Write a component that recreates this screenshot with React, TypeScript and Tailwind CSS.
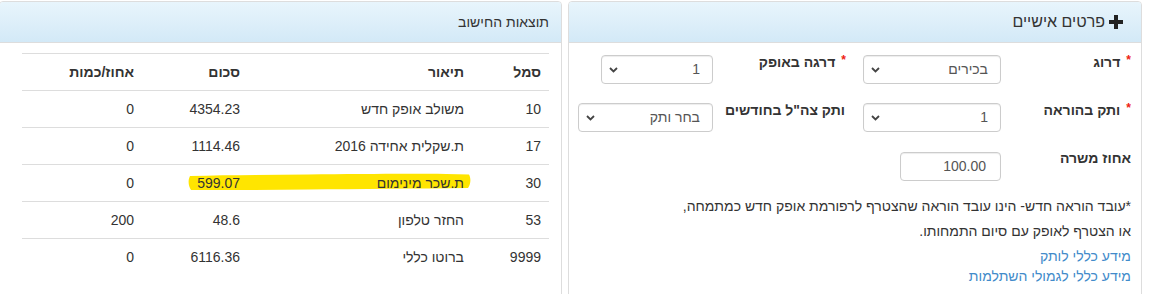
import React from "react";

const rows = [
  { code: "10", desc: "משולב אופק חדש", sum: "4354.23", pct: "0" },
  { code: "17", desc: "ת.שקלית אחידה 2016", sum: "1114.46", pct: "0" },
  { code: "30", desc: "ת.שכר מינימום", sum: "599.07", pct: "0" },
  { code: "53", desc: "החזר טלפון", sum: "48.6", pct: "200" },
  { code: "9999", desc: "ברוטו כללי", sum: "6116.36", pct: "0" },
];

function Chevron() {
  return (
    <svg width="9" height="6" viewBox="0 0 9 6" className="shrink-0">
      <path d="M1 1 L4.5 4.5 L8 1" fill="none" stroke="#444" strokeWidth="1.8" />
    </svg>
  );
}

function Select({ value, w }: { value: string; w: string }) {
  return (
    <div
      className={`${w} h-[29px] mt-[3px] border border-[#ccc] rounded-[4px] bg-white flex items-center justify-between pr-[12px] pl-[7px] text-[14px] text-[#555] shadow-[inset_0_1px_1px_rgba(0,0,0,0.075)]`}
    >
      <span>{value}</span>
      <Chevron />
    </div>
  );
}

function Star() {
  return <span className="text-[#e21] text-[12px] leading-none relative top-[2px] ml-[6px]">*</span>;
}

export default function App() {
  return (
    <div
      dir="rtl"
      className="w-[1160px] h-[294px] overflow-hidden bg-white flex items-start gap-[6px] pr-[18px] pt-[1px] font-['Liberation_Sans',Arial,sans-serif] text-[14px] text-[#333]"
    >
      {/* Right panel: personal details */}
      <div className="shrink-0 w-[574px] h-[320px] border border-[#ddd] rounded-[4px]">
        <div className="h-[41px] border-b border-[#ddd] rounded-t-[3px] bg-linear-to-b from-[#e8f5fc] to-[#d3e9f7] flex items-center gap-[4px] pr-[4px]">
          <svg width="14" height="14" viewBox="0 0 14 14" className="mr-[14px]">
            <rect x="0" y="5" width="14" height="4" fill="#222" />
            <rect x="5" y="0" width="4" height="14" fill="#222" />
          </svg>
          <span className="text-[16px] text-[#333]">פרטים אישיים</span>
        </div>
        <div className="pt-[9px] pr-[10px]">
          <div className="h-[48px] flex items-start">
            <div className="w-[130px] leading-[20px] font-bold flex items-start">
              <Star />
              <span>דרוג</span>
            </div>
            <Select value="בכירים" w="w-[138px]" />
            <div className="w-[150px] pr-[17px] leading-[20px] font-bold flex items-start">
              <Star />
              <span>דרגה באופק</span>
            </div>
            <Select value="1" w="w-[112px]" />
          </div>
          <div className="h-[48px] flex items-start">
            <div className="w-[130px] leading-[20px] font-bold flex items-start">
              <Star />
              <span>ותק בהוראה</span>
            </div>
            <Select value="1" w="w-[138px]" />
            <div className="w-[150px] pr-[18px] leading-[20px] font-bold">ותק צה"ל בחודשים</div>
            <Select value="בחר ותק" w="w-[135px]" />
          </div>
          <div className="h-[48px] flex items-start">
            <div className="w-[130px] leading-[20px] font-bold">אחוז משרה</div>
            <div className="w-[101px] h-[29px] mt-[4px] border border-[#ccc] rounded-[4px] flex items-center pr-[14px] text-[#555] shadow-[inset_0_1px_1px_rgba(0,0,0,0.075)]">
              100.00
            </div>
          </div>
          <p className="leading-[20px] mb-[5px]">
            *עובד הוראה חדש- הינו עובד הוראה שהצטרף לרפורמת אופק חדש כמתמחה,
          </p>
          <p className="leading-[20px] mb-[5px]">או הצטרף לאופק עם סיום התמחותו.</p>
          <div className="leading-[20px] text-[#428bca]">
            <div>מידע כללי לותק</div>
            <div>מידע כללי לגמולי השתלמות</div>
          </div>
        </div>
      </div>

      {/* Left panel: calculation results */}
      <div className="shrink-0 w-[563px] h-[320px] border border-[#ddd] rounded-[4px]">
        <div className="h-[41px] border-b border-[#ddd] rounded-t-[3px] bg-linear-to-b from-[#e8f5fc] to-[#d3e9f7] flex items-center pr-[12px]">
          <span className="text-[14px] text-[#333]">תוצאות החישוב</span>
        </div>
        <div className="pt-[10px] pr-[12px]">
          <div className="relative w-[527px]">
            <svg
              className="absolute left-[166px] top-[120px]"
              width="284"
              height="18"
              viewBox="0 0 284 18"
            >
              <path
                d="M2 3 C40 2 80 2 120 1.5 C170 1 220 0.5 258 1 L281 1.5 C283 5 283 11 280 15 C230 15.5 170 16 120 16.5 C80 17 40 17 3 17 C0 12 0 7 2 3 Z"
                fill="#ffe500"
              />
            </svg>
            <table className="relative w-[527px] border-collapse text-right">
              <thead>
                <tr className="border-t border-[#ddd]">
                  <th className="w-[77px] px-[8px] py-[8px] leading-[20px] font-bold">סמל</th>
                  <th className="w-[224px] px-[8px] py-[8px] leading-[20px] font-bold">תיאור</th>
                  <th className="w-[106px] px-[8px] py-[8px] leading-[20px] font-bold">סכום</th>
                  <th className="w-[120px] px-[8px] py-[8px] leading-[20px] font-bold">אחוז/כמות</th>
                </tr>
              </thead>
              <tbody>
                {rows.map((r) => (
                  <tr key={r.code} className="border-t border-[#ddd]">
                    <td className="px-[8px] py-[8px] leading-[20px]">{r.code}</td>
                    <td className="px-[8px] py-[8px] leading-[20px]">{r.desc}</td>
                    <td className="px-[8px] py-[8px] leading-[20px]">{r.sum}</td>
                    <td className="px-[8px] py-[8px] leading-[20px]">{r.pct}</td>
                  </tr>
                ))}
              </tbody>
            </table>
          </div>
        </div>
      </div>
    </div>
  );
}
